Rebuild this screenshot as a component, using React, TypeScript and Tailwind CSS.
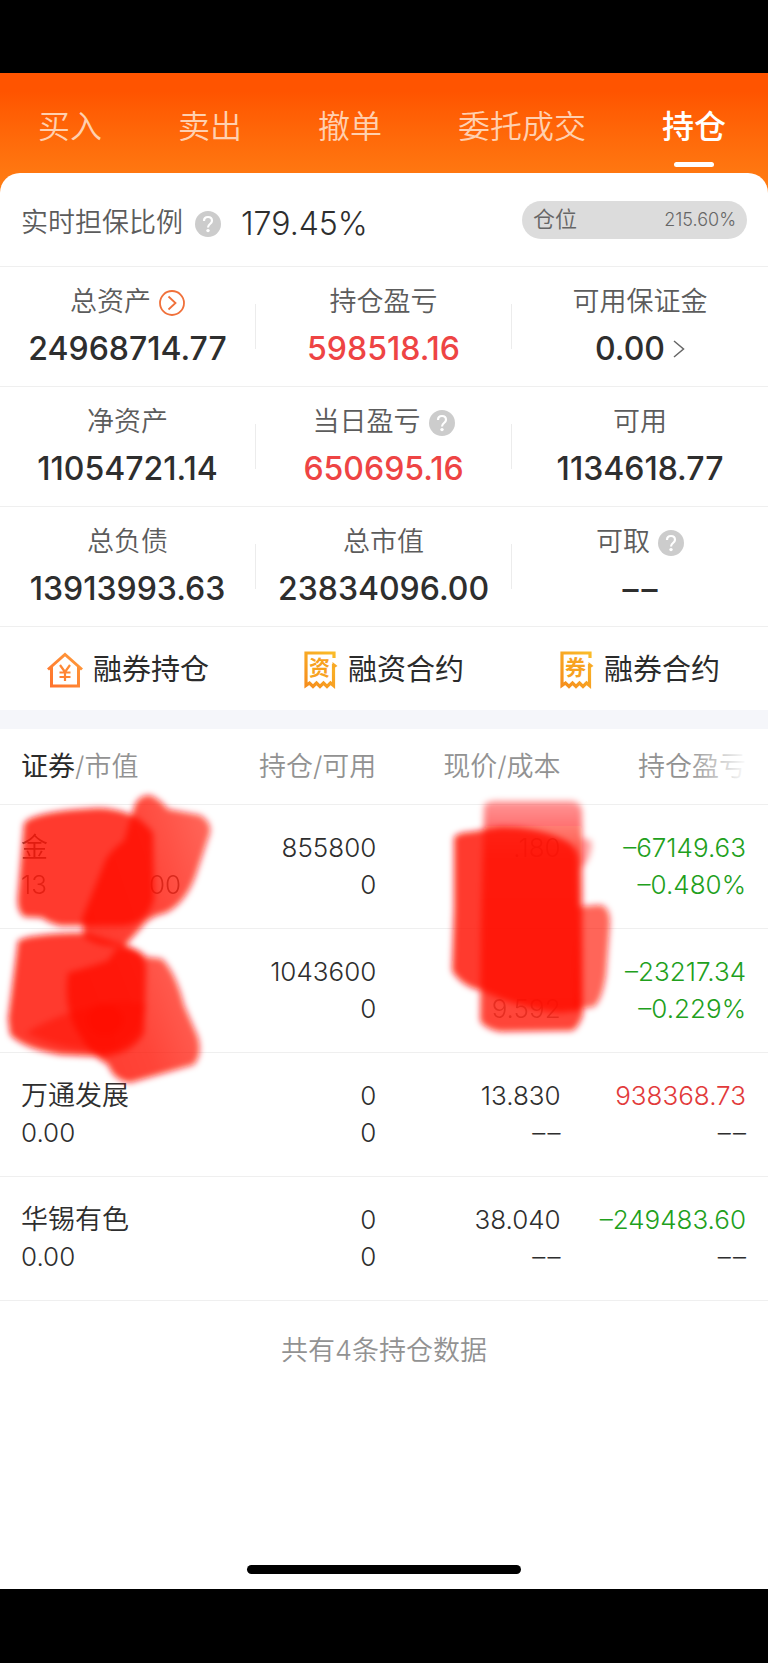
import React, { useState } from "react";

type Stat = {
  label: string;
  value: string;
  tone?: string;
  icon?: "help" | "arrow";
  link?: boolean;
};

type Holding = {
  name: React.ReactNode;
  marketValue: React.ReactNode;
  amount: string;
  available: string;
  price: React.ReactNode;
  cost: React.ReactNode;
  profit: string;
  rate: string;
  tone: string;
};

// two dashes with a hair space between
const EMPTY = "–\u200a–";

const tabs = ["买入", "卖出", "撤单", "委托成交", "持仓"];

const stats: Stat[][] = [
  [
    { label: "总资产", value: "24968714.77", icon: "arrow" },
    { label: "持仓盈亏", value: "598518.16", tone: "text-[#ee4444]" },
    { label: "可用保证金", value: "0.00", link: true },
  ],
  [
    { label: "净资产", value: "11054721.14" },
    { label: "当日盈亏", value: "650695.16", tone: "text-[#ee4444]", icon: "help" },
    { label: "可用", value: "1134618.77" },
  ],
  [
    { label: "总负债", value: "13913993.63" },
    { label: "总市值", value: "23834096.00" },
    { label: "可取", value: EMPTY, icon: "help" },
  ],
];

const holdings: Holding[] = [
  {
    name: <span className="opacity-80">金</span>,
    marketValue: (
      <span className="flex w-40 justify-between opacity-70">
        <span>13</span>
        <span>00</span>
      </span>
    ),
    amount: "855800",
    available: "0",
    price: <span className="opacity-50">.180</span>,
    cost: "",
    profit: "–67149.63",
    rate: "–0.480%",
    tone: "text-[#21a01c]",
  },
  {
    name: "",
    marketValue: "",
    amount: "1043600",
    available: "0",
    price: "",
    cost: <span className="opacity-50">9.592</span>,
    profit: "–23217.34",
    rate: "–0.229%",
    tone: "text-[#21a01c]",
  },
  {
    name: "万通发展",
    marketValue: "0.00",
    amount: "0",
    available: "0",
    price: "13.830",
    cost: EMPTY,
    profit: "938368.73",
    rate: EMPTY,
    tone: "text-[#e23a3a]",
  },
  {
    name: "华锡有色",
    marketValue: "0.00",
    amount: "0",
    available: "0",
    price: "38.040",
    cost: EMPTY,
    profit: "–249483.60",
    rate: EMPTY,
    tone: "text-[#21a01c]",
  },
];

function HelpIcon() {
  return (
    <svg viewBox="0 0 26 26" className="size-[26px] shrink-0" fill="none">
      <circle cx="13" cy="13" r="13" fill="#cccccc" />
      <path
        d="M9 10C9 7.500 10.600 6 13 6s4 1.500 4 3.700c0 1.600-.9 2.400-2 3.300-1.300 1.100-2 1.800-2 3.400"
        stroke="#fff"
        strokeWidth="2.200"
      />
      <circle cx="13" cy="19.600" r="1.700" fill="#fff" />
    </svg>
  );
}

function ArrowIcon() {
  return (
    <svg viewBox="0 0 26 26" className="size-[26px] shrink-0" fill="none" stroke="#f0703a" strokeWidth="1.8">
      <circle cx="13" cy="13" r="12" />
      <path d="M9.500 6.500l7 6.500-7 6.500" />
    </svg>
  );
}

function HouseIcon() {
  return (
    <svg viewBox="0 0 36 36" className="size-9 shrink-0" fill="none" stroke="url(#house)" strokeWidth="3">
      <defs>
        <linearGradient id="house" gradientUnits="userSpaceOnUse" x1="0" y1="36" x2="36" y2="0">
          <stop offset="0" stopColor="#ff6f2c" />
          <stop offset="1" stopColor="#ff9f3c" />
        </linearGradient>
      </defs>
      <path d="M1 17.500L18 2.500l17 15M4.500 15V34h27V15" />
      <path d="M13 13l5 7 5-7M18 20v9M12.500 20.500h11M12.500 25h11" strokeWidth="2.200" />
    </svg>
  );
}

function BillIcon({ char }: { char: string }) {
  return (
    <svg viewBox="0 0 34 38" className="h-[38px] w-[34px] shrink-0" fill="none">
      <defs>
        <linearGradient id="bill" gradientUnits="userSpaceOnUse" x1="34" y1="0" x2="0" y2="38">
          <stop offset="0" stopColor="#fbc02a" />
          <stop offset="1" stopColor="#f58a1c" />
        </linearGradient>
      </defs>
      <path
        d="M30 7V2H2V34.500l3.500-2.500 3.500 3.500 3.500-3.500 3.500 3.500 3.500-3.500 3.500 3.500 3.500-3.500 3 2.500V13"
        stroke="url(#bill)"
        strokeWidth="3.200"
      />
      <path d="M28.500 11l5 4-5 3z" fill="#f8a824" />
      <text
        x="15.500"
        y="24"
        textAnchor="middle"
        fill="#f7a21f"
        className="font-['Noto_Sans_CJK_SC',sans-serif] text-[21px] font-bold"
      >
        {char}
      </text>
    </svg>
  );
}

// Marker strokes painted over the private cells
function Redaction() {
  return (
    <svg
      viewBox="0 0 768 572"
      preserveAspectRatio="none"
      className="pointer-events-none absolute inset-0 h-full w-full"
      fill="#ff0c02"
      fillOpacity="0.82"
      aria-hidden="true"
    >
      <defs>
        <filter id="soft" x="-20%" y="-20%" width="140%" height="140%">
          <feGaussianBlur stdDeviation="3" />
        </filter>
        <linearGradient id="fadeDown" x1="0" y1="0" x2="0" y2="1">
          <stop offset="0" stopColor="#ff0c02" stopOpacity="0.5" />
          <stop offset="0.25" stopColor="#ff0c02" stopOpacity="0.9" />
          <stop offset="1" stopColor="#ff0c02" stopOpacity="0.95" />
        </linearGradient>
        <linearGradient id="fadeRight" x1="0" y1="0.7" x2="1" y2="0.3">
          <stop offset="0" stopColor="#ff0c02" />
          <stop offset="0.5" stopColor="#ff0c02" stopOpacity="0.95" />
          <stop offset="1" stopColor="#ff0c02" stopOpacity="0.8" />
        </linearGradient>
      </defs>
      <g filter="url(#soft)">
        <path d="M24 94Q34 82 98 79Q136 80 153 104L154 170Q148 194 124 197L60 197Q48 194 42 189L24 188Q16 182 18 165Z" />
        <path
          d="M134 78Q138 66 150 66Q160 70 168 80L200 86Q212 93 210 104L196 146Q186 174 166 184Q148 188 142 198L124 218Q96 218 84 208L82 190L106 130Q114 118 124 112Z"
          fill="url(#fadeRight)"
        />
        <path d="M18 212Q30 205 84 204L130 218Q146 226 146 240L144 304Q132 326 100 328L60 326Q24 320 10 306L8 290Z" />
        <path
          d="M68 244Q84 240 108 232L116 220Q136 216 146 228L162 230Q176 244 184 276L198 308Q203 326 194 336L130 354Q114 352 108 336Q92 328 82 310Q62 282 68 244Z"
          fill="url(#fadeRight)"
        />
        <path d="M26 304Q60 284 100 276Q124 270 146 276Q142 310 110 322Q60 322 26 304Z" fillOpacity="0.5" />
        <ellipse cx="105" cy="291" rx="18" ry="16" fillOpacity="0.7" />

        <path
          d="M484 76Q490 71 500 72L572 72Q582 74 582 82L583 286Q578 300 572 302L500 303Q484 300 480 292L481 200Z"
          fill="url(#fadeDown)"
        />
        <path d="M454 108Q460 103 470 103L500 98Q540 98 566 112Q578 118 578 130L580 282L560 284Q520 280 482 262Q462 258 452 242L454 180Z" />
        <path d="M580 110Q592 108 592 116Q590 134 580 140Z" fillOpacity="0.35" />
        <path d="M578 178L600 176Q610 178 610 194L606 246Q602 272 594 278L574 281Z" fillOpacity="0.65" />
      </g>
    </svg>
  );
}

function StatCell({ stat, divided }: { stat: Stat; divided: boolean }) {
  return (
    <div className="flex items-center">
      <dl className="min-w-0 grow">
        <dt className="flex h-9 items-center justify-center gap-2 text-[27px] font-[350] text-[#5c5c5c]">
          {stat.label}
          {stat.icon === "help" && <HelpIcon />}
          {stat.icon === "arrow" && <ArrowIcon />}
        </dt>
        <dd
          className={`mt-2 flex h-10 items-center justify-center gap-2 text-[32px] font-medium ${
            stat.tone ?? "text-[#2e2e2e]"
          }`}
        >
          {stat.value}
          {stat.link && (
            <svg viewBox="0 0 12 18" className="h-[18px] w-3" fill="none" stroke="#666" strokeWidth="1.5">
              <path d="M1 1l9.500 8L1 17" />
            </svg>
          )}
        </dd>
      </dl>
      {divided && <span className="h-[45px] w-px bg-[#ececec]" />}
    </div>
  );
}

function HoldingsTable() {
  return (
    <div className="relative">
      <table className="w-full table-fixed border-collapse text-right text-[26px] leading-[37px] font-[350] text-[#2e2e2e]">
        <thead>
          <tr className="h-[75px] border-b border-[#efefef] text-[27px] text-[#929292]">
            <th className="w-[25%] pl-[21px] text-left font-[350] whitespace-nowrap">
              <span className="font-normal text-[#2b2b2b]">证券</span>/市值
            </th>
            <th className="w-[24%] font-[350]">持仓/可用</th>
            <th className="w-[24%] font-[350]">现价/成本</th>
            <th className="w-[27%] pr-[22px] font-[350]">持仓盈亏</th>
          </tr>
        </thead>
        <tbody>
          {holdings.map((h, i) => (
            <tr key={i} className="h-[124px] border-b border-[#efefef]">
              <td className="pl-[21px] text-left">
                <div className="h-[37px] text-[27px]">{h.name}</div>
                <div className="h-[37px]">{h.marketValue}</div>
              </td>
              <td>
                <div>{h.amount}</div>
                <div>{h.available}</div>
              </td>
              <td>
                <div className="h-[37px]">{h.price}</div>
                <div className="h-[37px]">{h.cost}</div>
              </td>
              <td className="pr-[22px]">
                <div className={h.tone}>{h.profit}</div>
                <div className={h.rate === EMPTY ? "" : h.tone}>{h.rate}</div>
              </td>
            </tr>
          ))}
        </tbody>
      </table>
      <div className="absolute top-0 right-0 h-[75px] w-20 bg-linear-to-r from-white/0 to-white to-75%" />
      <Redaction />
    </div>
  );
}

export default function App() {
  const [active, setActive] = useState("持仓");

  return (
    <div className="flex min-h-screen flex-col bg-white font-[Inter,'Noto_Sans_CJK_SC',sans-serif]">
      <div className="h-[73px] bg-black" />

      <header className="bg-linear-to-b from-[#ff5400] from-15% to-[#ff7f14] pr-[42px] pb-5 pl-[38px]">
        <nav className="flex h-[100px] justify-between">
          {tabs.map((tab) => (
            <button
              key={tab}
              onClick={() => setActive(tab)}
              className={`flex flex-col items-center pt-[30px] text-[32px] leading-[48px] ${
                active === tab ? "font-medium text-white" : "font-[350] text-[#ffd0b0]"
              }`}
            >
              {tab}
              {active === tab && <span className="mt-[11px] h-[5px] w-10 rounded-full bg-white" />}
            </button>
          ))}
        </nav>
      </header>

      <main className="-mt-5 grow rounded-t-[20px] bg-white">
        <section className="flex h-[94px] items-center justify-between border-b border-[#efefef] pr-[21px] pl-[21px]">
          <div className="flex items-center pt-2">
            <span className="text-[27px] font-[350] text-[#5c5c5c]">实时担保比例</span>
            <span className="mr-5 ml-3">
              <HelpIcon />
            </span>
            <span className="text-[32px] font-[350] text-[#2e2e2e]">179.45%</span>
          </div>
          <div className="flex h-[38px] w-[225px] items-center justify-between rounded-full bg-[#dcdcdc] px-[11px] text-[#666]">
            <span className="text-[22px] font-[350]">仓位</span>
            <span className="text-[18px] font-[350]">215.60%</span>
          </div>
        </section>

        {stats.map((row, i) => (
          <section key={i} className="grid h-[120px] grid-cols-3 border-b border-[#efefef]">
            {row.map((stat, j) => (
              <StatCell key={stat.label} stat={stat} divided={j < 2} />
            ))}
          </section>
        ))}

        <section className="grid h-[83px] grid-cols-3 pt-0.5 text-[29px] text-[#2b2b2b]">
          <button className="flex items-center justify-center gap-2.5">
            <HouseIcon />
            融券持仓
          </button>
          <button className="flex items-center justify-center gap-2.5">
            <BillIcon char="资" />
            融资合约
          </button>
          <button className="flex items-center justify-center gap-2.5">
            <BillIcon char="券" />
            融券合约
          </button>
        </section>

        <div className="h-[19px] bg-[#f5f6fa]" />

        <HoldingsTable />

        <p className="pt-[30px] text-center text-[27px] font-[350] text-[#929292]">共有4条持仓数据</p>
      </main>

      <footer>
        <div className="mx-auto mb-[15px] h-[9px] w-[274px] rounded-full bg-black" />
        <div className="h-[74px] bg-black" />
      </footer>
    </div>
  );
}
